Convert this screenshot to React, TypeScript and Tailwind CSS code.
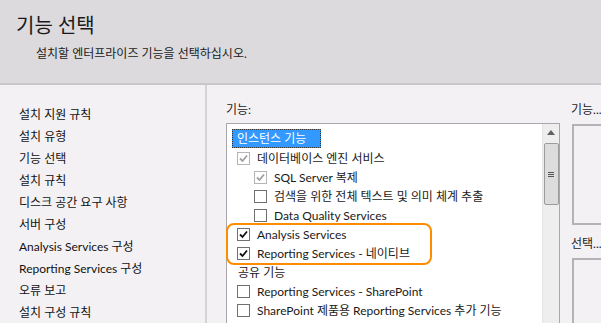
import React from 'react';

const font = { fontFamily: 'Lato, "Noto Sans CJK KR", sans-serif' };

const steps = [
  '설치 지원 규칙',
  '설치 유형',
  '기능 선택',
  '설치 규칙',
  '디스크 공간 요구 사항',
  '서버 구성',
  'Analysis Services 구성',
  'Reporting Services 구성',
  '오류 보고',
  '설치 구성 규칙',
];

function Check({ checked, disabled }: { checked?: boolean; disabled?: boolean }) {
  return (
    <span
      className={`flex h-[13px] w-[13px] shrink-0 items-center justify-center border bg-white ${
        disabled ? 'border-[#b5b5b5]' : 'border-[#707070]'
      }`}
    >
      {checked && (
        <svg width="9" height="9" viewBox="0 0 9 9">
          <path
            d="M1 4.5 L3.5 7 L8 1.5"
            fill="none"
            stroke={disabled ? '#a0a0a0' : '#111'}
            strokeWidth="1.8"
          />
        </svg>
      )}
    </span>
  );
}

function Row({
  level,
  label,
  checked,
  disabled,
}: {
  level: number;
  label: string;
  checked?: boolean;
  disabled?: boolean;
}) {
  return (
    <div className={`flex h-[19px] items-center gap-[7px] ${level === 2 ? 'pl-[22px]' : 'pl-[5px]'}`}>
      <Check checked={checked} disabled={disabled} />
      <span className="whitespace-nowrap text-[12px] text-[#1a1a1a]">{label}</span>
    </div>
  );
}

export default function App() {
  return (
    <div className="flex h-[323px] w-[601px] flex-col overflow-hidden bg-[#f4f1f5]" style={font}>
      {/* Header */}
      <div className="h-[85px] shrink-0 border-b-2 border-[#c9c7cb] bg-[#dcdadd] pl-[16px] pt-[11px]">
        <h1 className="text-[20px] leading-[28px] text-[#1a1a1a]">기능 선택</h1>
        <p className="mt-[6px] pl-[20px] text-[12px] text-[#1a1a1a]">설치할 엔터프라이즈 기능을 선택하십시오.</p>
      </div>

      <div className="flex flex-1">
        {/* Steps */}
        <div className="w-[207px] shrink-0 border-r-2 border-[#d6d3d8] pl-[19px] pt-[19px]">
          {steps.map((s) => (
            <div key={s} className="h-[22px] text-[12px] leading-[22px] text-[#111]">
              {s}
            </div>
          ))}
        </div>

        {/* Feature tree */}
        <div className="flex flex-1 pl-[19px]">
          <div className="w-[334px] shrink-0">
            <div className="pt-[17px] text-[12px] leading-[16px] text-[#1a1a1a]">기능:</div>
            <div className="relative mt-[5px] flex h-[220px] border border-[#a9a7ad] bg-white">
              <div className="flex-1 overflow-hidden pt-[5px] pl-[5px]">
                <div className="mb-[1px] flex h-[19px] w-[89px] items-center border border-dotted border-[#333] bg-[#3399ff] pl-[4px] text-[12px] text-white">
                  인스턴스 기능
                </div>
                <Row level={1} label="데이터베이스 엔진 서비스" checked disabled />
                <Row level={2} label="SQL Server 복제" checked disabled />
                <Row level={2} label="검색을 위한 전체 텍스트 및 의미 체계 추출" />
                <Row level={2} label="Data Quality Services" />
                <Row level={1} label="Analysis Services" checked />
                <Row level={1} label="Reporting Services - 네이티브" checked />
                <div className="flex h-[19px] items-center pl-[6px] text-[12px] text-[#1a1a1a]">공유 기능</div>
                <Row level={1} label="Reporting Services - SharePoint" />
                <Row level={1} label="SharePoint 제품용 Reporting Services 추가 기능" />
              </div>
              {/* Scrollbar */}
              <div className="flex w-[17px] shrink-0 flex-col items-center border-l border-[#e4e4e4] bg-[#eeeeee]">
                <div className="flex h-[17px] items-center justify-center">
                  <svg width="8" height="5" viewBox="0 0 8 5">
                    <path d="M0 5 L4 0 L8 5 Z" fill="#606060" />
                  </svg>
                </div>
                <div className="mt-[2px] flex h-[62px] w-[15px] items-center justify-center rounded-[2px] border border-[#9c9c9c] bg-[#dcdcdc]">
                  <div className="flex flex-col gap-[1px]">
                    <div className="h-[1px] w-[6px] bg-[#555]" />
                    <div className="h-[1px] w-[6px] bg-[#555]" />
                    <div className="h-[1px] w-[6px] bg-[#555]" />
                  </div>
                </div>
              </div>

              {/* Highlight box */}
              <div className="absolute left-[-1px] top-[99px] h-[42px] w-[206px] rounded-[8px] border-2 border-[#ff8c00]" />
            </div>
          </div>

          {/* Right column */}
          <div className="ml-[11px] flex-1 overflow-hidden">
            <div className="whitespace-nowrap pt-[17px] text-[12px] leading-[16px] text-[#1a1a1a]">기능...</div>
            <div className="ml-[1px] mt-[6px] h-[101px] border-b-2 border-l-2 border-t-2 border-[#b4b2b7] bg-[#f4f1f5]" />
            <div className="whitespace-nowrap pt-[11px] text-[12px] leading-[16px] text-[#1a1a1a]">선택...</div>
            <div className="ml-[1px] mt-[6px] h-[80px] border-l-2 border-t-2 border-[#b4b2b7]" />
          </div>
        </div>
      </div>
    </div>
  );
}
